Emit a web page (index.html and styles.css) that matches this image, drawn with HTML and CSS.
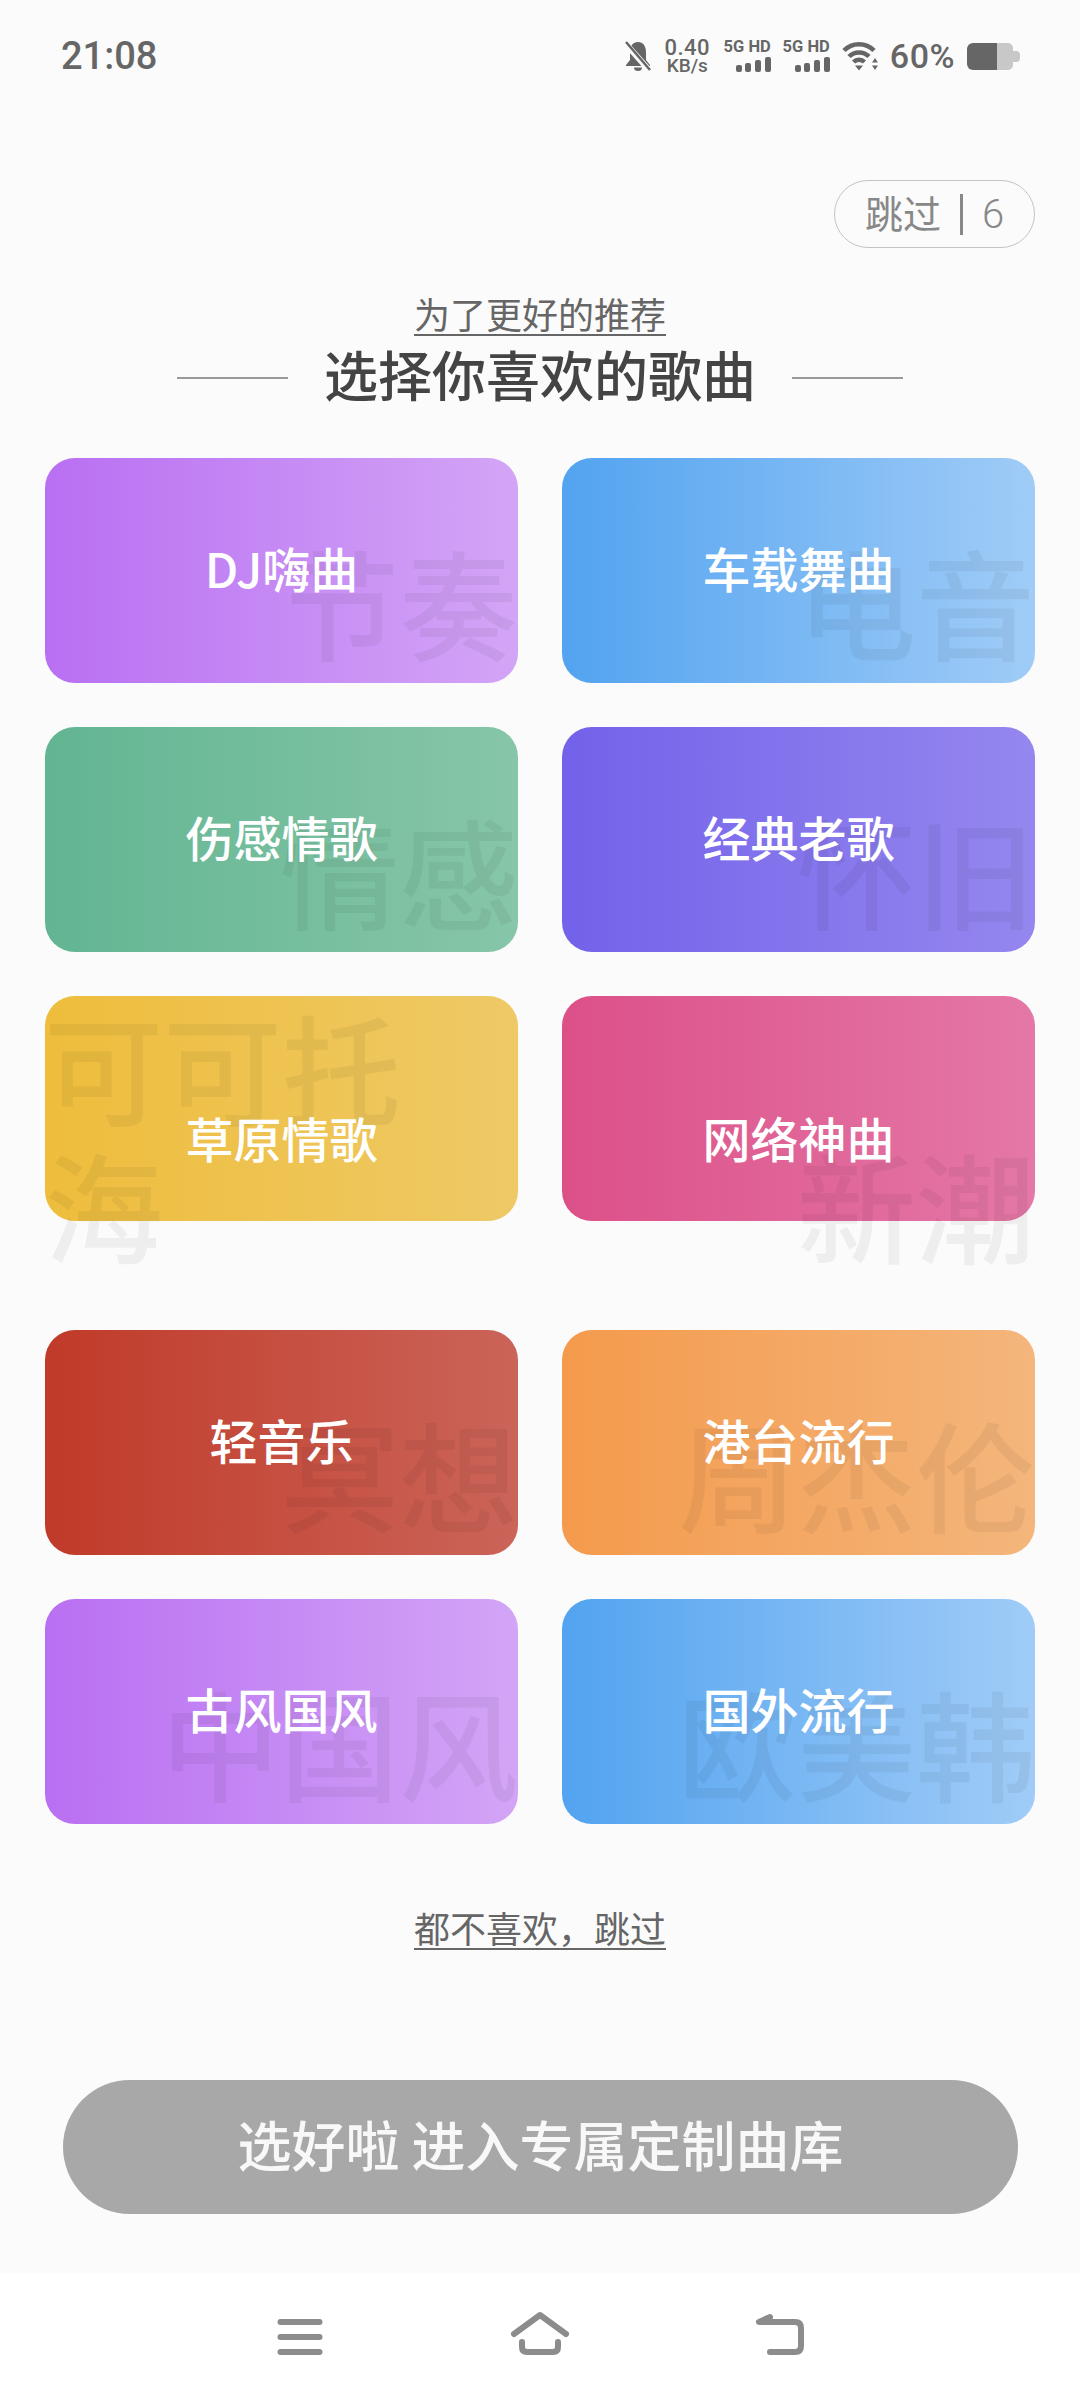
FILE: index.html
```html
<!DOCTYPE html>
<html lang="zh-CN">
<head>
    <meta charset="UTF-8">
    <title>选择你喜欢的歌曲</title>
    <link rel="stylesheet" href="styles.css">
</head>
<body>
    <div class="phone">
        <div class="status">
            <div class="time">21:08</div>
            <div class="status-icons">
                <svg class="bell" width="26" height="30" viewBox="0 0 26 30">
                    <path d="M13 1C8 1 5 5 5 11v8l-4 5v1h24v-1l-4-5v-8C21 5 18 1 13 1z" fill="#666"/>
                    <path d="M9 26.500a4 3.500 0 0 0 8 0z" fill="#666"/>
                    <path d="M0 2l24 27" stroke="#fbfbfb" stroke-width="6"/>
                    <path d="M1 1l24 28" stroke="#666" stroke-width="2.500"/>
                </svg>
                <div class="speed"><span class="speed-num">0.40</span><span class="speed-unit">KB/s</span></div>
                <div class="net">
                    <span class="net-label">5G HD</span>
                    <svg width="35" height="15" viewBox="0 0 35 15" fill="#666">
                        <rect x="0" y="8" width="6" height="7" rx="2"/>
                        <rect x="9" y="6" width="6" height="9" rx="2"/>
                        <rect x="19" y="3" width="6" height="12" rx="2"/>
                        <rect x="29" y="0" width="6" height="15" rx="2"/>
                    </svg>
                </div>
                <div class="net">
                    <span class="net-label">5G HD</span>
                    <svg width="35" height="15" viewBox="0 0 35 15" fill="#666">
                        <rect x="0" y="8" width="6" height="7" rx="2"/>
                        <rect x="9" y="6" width="6" height="9" rx="2"/>
                        <rect x="19" y="3" width="6" height="12" rx="2"/>
                        <rect x="29" y="0" width="6" height="15" rx="2"/>
                    </svg>
                </div>
                <svg class="wifi" width="36" height="30" viewBox="0 0 36 30" fill="none" stroke="#666" stroke-width="4.500">
                    <path d="M2 9.500C10 1 24 1 32 9.500"/>
                    <path d="M7 15.500C12.500 10 21.500 10 27 15.500"/>
                    <path d="M11.500 21C14.500 18 19.500 18 22.500 21"/>
                    <path d="M13 24.500h8l-4 5z" fill="#666" stroke="none"/>
                    <path d="M33 17l3 4.500h-6zM33 29l3-4.500h-6z" fill="#666" stroke="none"/>
                </svg>
                <div class="percent">60%</div>
                <svg class="battery" width="53" height="27" viewBox="0 0 53 27">
                    <path d="M30 0H41a5 5 0 0 1 5 5v3h3a4 4 0 0 1 4 4v3a4 4 0 0 1-4 4h-3v3a5 5 0 0 1-5 5H30z" fill="#c8c8c8"/>
                    <path d="M6 0h24v27H6a6 6 0 0 1-6-6V6a6 6 0 0 1 6-6z" fill="#666"/>
                </svg>
            </div>
        </div>

        <div class="skip-row">
            <div class="skip-pill">
                <span class="skip-text">跳过</span>
                <span class="skip-line"></span>
                <span class="skip-count">6</span>
            </div>
        </div>

        <div class="subtitle">为了更好的推荐</div>
        <div class="title-row">
            <span class="title-line"></span>
            <h2>选择你喜欢的歌曲</h2>
            <span class="title-line"></span>
        </div>

        <div class="grid">
            <div class="cell purple"><span class="mark">节奏</span><span class="label">DJ嗨曲</span></div>
            <div class="cell blue"><span class="mark">电音</span><span class="label">车载舞曲</span></div>
            <div class="cell green"><span class="mark">情感</span><span class="label">伤感情歌</span></div>
            <div class="cell indigo"><span class="mark">怀旧</span><span class="label">经典老歌</span></div>
            <div class="cell yellow tall"><span class="mark mark-wrap">可可托海</span><span class="label">草原情歌</span></div>
            <div class="cell pink tall"><span class="mark">新潮</span><span class="label">网络神曲</span></div>
            <div class="cell red"><span class="mark">冥想</span><span class="label">轻音乐</span></div>
            <div class="cell orange"><span class="mark">周杰伦</span><span class="label">港台流行</span></div>
            <div class="cell purple"><span class="mark">中国风</span><span class="label">古风国风</span></div>
            <div class="cell blue"><span class="mark">欧美韩</span><span class="label">国外流行</span></div>
        </div>

        <div class="skip-all">都不喜欢，跳过</div>
        <div class="enter-btn">选好啦 进入专属定制曲库</div>

        <div class="nav">
            <svg width="60" height="60" viewBox="0 0 60 60" fill="none" stroke="#8c8c8c" stroke-width="6" stroke-linecap="round">
                <path d="M10.500 12H49.500M10.500 27H49.500M10.500 42H49.500"/>
            </svg>
            <svg width="60" height="60" viewBox="0 0 60 60" fill="none" stroke="#8c8c8c" stroke-width="6" stroke-linecap="round" stroke-linejoin="round">
                <path d="M4 24L30 5L56 24"/>
                <path d="M12 32V37q0 5 5 5H43q5 0 5-5V32"/>
            </svg>
            <svg width="60" height="60" viewBox="0 0 60 60" fill="none" stroke="#8c8c8c" stroke-width="6" stroke-linecap="round" stroke-linejoin="round">
                <path d="M20 7L9 12H45q6 0 6 6V36q0 6-6 6H20"/>
            </svg>
        </div>
    </div>
</body>
</html>
```

FILE: styles.css
```css
* {
    box-sizing: border-box;
}
body {
    margin: 0;
    font-family: "Noto Sans CJK SC", "Noto Sans", sans-serif;
}
.phone {
    display: flex;
    flex-direction: column;
    width: 1080px;
    height: 2400px;
    background-color: #fbfbfb;
    overflow: hidden;
}

/* status bar */
.status {
    display: flex;
    justify-content: space-between;
    align-items: center;
    flex-shrink: 0;
    height: 112px;
    padding: 0 60px 0 61px;
    color: #666;
    font-family: Roboto, sans-serif;
}
.time {
    font-size: 38px;
    font-weight: 500;
}
.status-icons {
    display: flex;
    align-items: center;
    gap: 12px;
}
.speed {
    display: flex;
    flex-direction: column;
    align-items: center;
    width: 49px;
    font-weight: 500;
}
.speed-num {
    font-size: 22px;
    line-height: 19px;
    letter-spacing: 0.5px;
}
.speed-unit {
    font-size: 19px;
    line-height: 18px;
}
.net {
    display: flex;
    flex-direction: column;
    align-items: flex-end;
    gap: 3px;
    width: 47px;
}
.net-label {
    font-size: 16.500px;
    line-height: 14px;
    font-weight: 700;
    white-space: nowrap;
}
.percent {
    font-size: 34px;
    font-weight: 500;
    letter-spacing: 0.5px;
}

/* skip counter */
.skip-row {
    display: flex;
    justify-content: flex-end;
    padding-right: 45px;
    margin-top: 68px;
}
.skip-pill {
    display: flex;
    align-items: center;
    width: 201px;
    height: 68px;
    padding-left: 30px;
    border: 1.500px solid #c4c4c4;
    border-radius: 34px;
    color: #888;
    font-size: 38px;
}
.skip-text {
    margin-bottom: 5px;
}
.skip-line {
    width: 3px;
    height: 41px;
    margin: 0 19px 0 19px;
    background-color: #888;
}
.skip-count {
    font-family: Roboto, sans-serif;
    font-size: 40px;
    font-weight: 300;
}

/* heading */
.subtitle, .skip-all {
    align-self: center;
    color: #666;
    font-size: 36px;
    line-height: 40px;
    text-decoration: underline;
    text-decoration-thickness: 2px;
    text-underline-offset: 5px;
}
.subtitle {
    margin-top: 45px;
}
.title-row {
    display: flex;
    justify-content: center;
    align-items: center;
    gap: 36px;
    margin-top: 11px;
}
.title-row h2 {
    margin: 0;
    padding-bottom: 7px;
    color: #444;
    font-size: 54px;
    line-height: 60px;
    font-weight: 500;
}
.title-line {
    width: 111px;
    height: 2px;
    background-color: #999;
}

/* song cards */
.grid {
    display: grid;
    grid-template-columns: 473px 473px;
    gap: 44px;
    padding-left: 45px;
    margin-top: 47px;
}
.cell {
    position: relative;
    display: flex;
    justify-content: center;
    align-items: center;
    height: 225px;
    padding-bottom: 7px;
}
.cell.tall {
    height: 290px;
    padding-bottom: 9px;
}
.cell::before {
    content: "";
    position: absolute;
    top: 0;
    left: 0;
    right: 0;
    height: 225px;
    background: var(--card);
    border-radius: 30px;
}
.label {
    position: relative;
    color: white;
    font-size: 48px;
    font-weight: 500;
}
.mark {
    position: absolute;
    right: 0;
    bottom: 14px;
    z-index: 0;
    color: rgba(0, 0, 0, 0.05);
    font-size: 119px;
    line-height: 138px;
    font-weight: 500;
}
.mark-wrap {
    right: auto;
    left: -1px;
    width: 100%;
}
.purple { --card: linear-gradient(to right, #b96ff2, #d3a5f6); }
.blue { --card: linear-gradient(to right, #52a3f0, #a0ccf7); }
.green { --card: linear-gradient(to right, #62b592, #87c6a8); }
.indigo { --card: linear-gradient(to right, #7362ea, #9587ef); }
.yellow { --card: linear-gradient(to right, #eebd3c, #eec966); }
.pink { --card: linear-gradient(to right, #dc5088, #e478a6); }
.red { --card: linear-gradient(to right, #c03a28, #cb6459); }
.orange { --card: linear-gradient(to right, #f49a4c, #f4b67c); }

/* bottom */
.skip-all {
    margin-top: 83px;
}
.enter-btn {
    display: flex;
    justify-content: center;
    align-items: center;
    align-self: flex-start;
    width: 955px;
    height: 134px;
    margin: 133px 0 0 63px;
    padding-bottom: 8px;
    background-color: #a8a8a8;
    border-radius: 67px;
    color: #f8f8f8;
    font-size: 54px;
    font-weight: 500;
}
.nav {
    display: flex;
    justify-content: center;
    gap: 180px;
    height: 127px;
    margin-top: auto;
    padding-top: 37px;
    background-color: white;
}
```
